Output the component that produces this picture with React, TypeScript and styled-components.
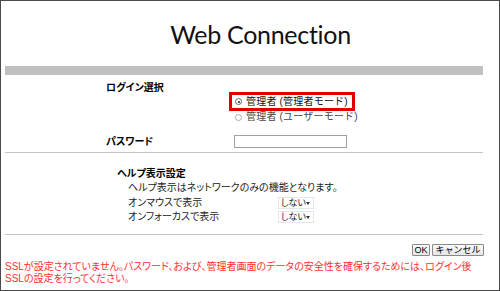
import React from "react";
import styled, { createGlobalStyle } from "styled-components";

const Global = createGlobalStyle`
  html, body { margin: 0; padding: 0; background: #fff; }
  body { font-family: "Liberation Sans", "Noto Sans CJK JP", sans-serif; }
  * { box-sizing: border-box; }
`;

const Frame = styled.div`
  width: 500px;
  height: 291px;
  border: 1px solid #4a4a4a;
  background: #fff;
  color: #111;
  font-size: 10px;
  line-height: 12px;
  font-family: "Liberation Sans", "Noto Sans CJK JP", sans-serif;
  font-feature-settings: "palt";
  overflow: hidden;
`;

const Header = styled.div`
  height: 65px;
  padding: 18px 0 0 21px;
  text-align: center;
`;

const Title = styled.h1`
  margin: 0;
  font-family: "Lato", "Liberation Sans", sans-serif;
  font-weight: 400;
  font-size: 25px;
  line-height: 30px;
  letter-spacing: -0.3px;
  color: #111;
`;

const Bar = styled.div`
  height: 9px;
  margin: 0 16px 0 4px;
  background: #c0c0c0;
`;

const Rule = styled.div<{ $top: number }>`
  height: 1px;
  margin: ${(p) => p.$top}px 16px 0 4px;
  background: #c4c4c4;
`;

const LoginGrid = styled.div`
  display: grid;
  grid-template-columns: 123px auto;
  grid-template-rows: auto auto;
  row-gap: 13px;
  padding: 7px 0 0 105px;
`;

const Label = styled.div`
  font-weight: bold;
  color: #000;
  line-height: 12px;
`;

const RadioGroup = styled.div`
  padding-top: 10px;
`;

const Highlight = styled.div`
  display: inline-flex;
  border: 3px solid #e00000;
  padding: 0 3px 0 3px;
  height: 19px;
  width: 126px;
  align-items: center;
`;

const RadioRow = styled.label<{ $muted?: boolean }>`
  display: flex;
  align-items: center;
  gap: 4px;
  height: 12px;
  padding-left: ${(p) => (p.$muted ? 6 : 0)}px;
  color: ${(p) => (p.$muted ? "#444" : "#111")};
  white-space: nowrap;
  font-feature-settings: normal;
  letter-spacing: 0.2px;
`;

const Radio = styled.span<{ $checked?: boolean }>`
  position: relative;
  width: 7px;
  height: 7px;
  border-radius: 50%;
  border: 1px solid ${(p) => (p.$checked ? "#666" : "#aaa")};
  background: #fff;
  flex: none;
  &::after {
    content: "";
    display: ${(p) => (p.$checked ? "block" : "none")};
    position: absolute;
    left: 1.5px;
    top: 1.5px;
    width: 2px;
    height: 2px;
    border-radius: 50%;
    background: #222;
  }
`;

const PasswordBox = styled.div`
  margin: -1px 0 0 5px;
  width: 113px;
  height: 13px;
  border: 1px solid #a0a0a0;
  background: #fff;
`;

const Help = styled.div`
  padding: 15px 0 0 116px;
`;

const HelpBody = styled.div`
  padding-left: 11px;
  color: #222;
`;

const HelpNote = styled.div`
  margin-top: 2px;
  height: 14px;
  line-height: 12px;
`;

const OptionRow = styled.div`
  display: grid;
  grid-template-columns: 150px auto;
  align-items: center;
  height: 14px;
`;

const Select = styled.div`
  display: inline-flex;
  align-items: center;
  justify-content: space-between;
  width: 36px;
  height: 12px;
  padding: 0 3px 0 2px;
  border: 1px solid #e6e6e6;
  font-size: 9px;
  color: #222;
  white-space: nowrap;
  &::after {
    content: "";
    border-left: 2.5px solid transparent;
    border-right: 2.5px solid transparent;
    border-top: 3px solid #333;
  }
`;

const Actions = styled.div`
  display: flex;
  justify-content: flex-end;
  gap: 2px;
  margin: 9px 15px 0 0;
`;

const Button = styled.button<{ $w: number }>`
  width: ${(p) => p.$w}px;
  height: 12px;
  padding: 0;
  border: 1px solid #8a8a8a;
  border-radius: 1px;
  background: linear-gradient(#fafafa, #e6e6e6);
  font-family: "Liberation Sans", "Noto Sans CJK JP", sans-serif;
  font-size: 9px;
  line-height: 10px;
  color: #000;
`;

const Warning = styled.p`
  margin: 5px 0 0 4px;
  color: #ff3030;
  font-size: 10px;
  line-height: 12px;
`;

export default function App() {
  return (
    <>
      <Global />
      <Frame>
        <Header>
          <Title>Web Connection</Title>
        </Header>
        <Bar />
        <LoginGrid>
          <Label>ログイン選択</Label>
          <RadioGroup>
            <Highlight>
              <RadioRow>
                <Radio $checked />
                管理者 (管理者モード)
              </RadioRow>
            </Highlight>
            <RadioRow $muted>
              <Radio />
              管理者 (ユーザーモード)
            </RadioRow>
          </RadioGroup>
          <Label>パスワード</Label>
          <PasswordBox />
        </LoginGrid>
        <Rule $top={4} />
        <Help>
          <Label>ヘルプ表示設定</Label>
          <HelpBody>
            <HelpNote>ヘルプ表示はネットワークのみの機能となります。</HelpNote>
            <OptionRow>
              <span>オンマウスで表示</span>
              <Select>しない</Select>
            </OptionRow>
            <OptionRow>
              <span>オンフォーカスで表示</span>
              <Select>しない</Select>
            </OptionRow>
          </HelpBody>
        </Help>
        <Rule $top={10} />
        <Actions>
          <Button $w={18}>OK</Button>
          <Button $w={52}>キャンセル</Button>
        </Actions>
        <Warning>
          SSLが設定されていません。パスワード、および、管理者画面のデータの安全性を確保するためには、ログイン後
          <br />
          SSLの設定を行ってください。
        </Warning>
      </Frame>
    </>
  );
}
